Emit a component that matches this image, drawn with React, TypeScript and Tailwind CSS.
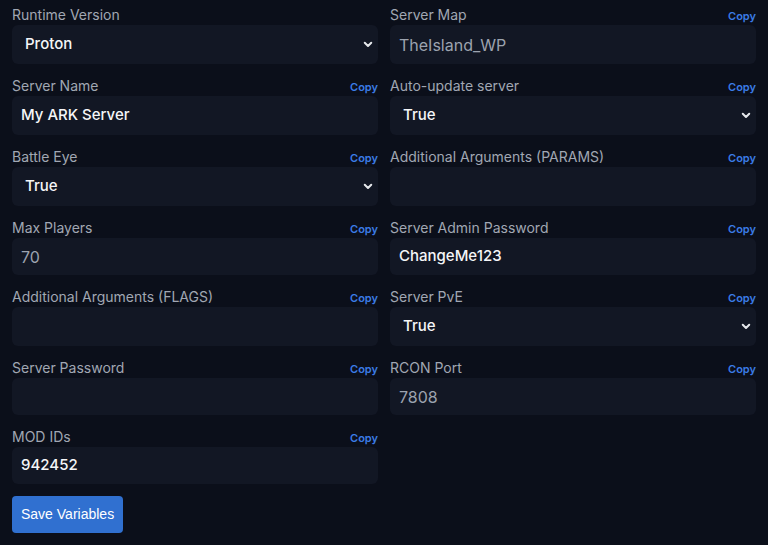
import React from "react";

type Field =
  | { label: string; kind: "select"; value: string; copy?: boolean }
  | { label: string; kind: "input"; value?: string; placeholder?: string; copy?: boolean };

const fields: Field[] = [
  { label: "Runtime Version", kind: "select", value: "Proton" },
  { label: "Server Map", kind: "input", placeholder: "TheIsland_WP", copy: true },
  { label: "Server Name", kind: "input", value: "My ARK Server", copy: true },
  { label: "Auto-update server", kind: "select", value: "True", copy: true },
  { label: "Battle Eye", kind: "select", value: "True", copy: true },
  { label: "Additional Arguments (PARAMS)", kind: "input", copy: true },
  { label: "Max Players", kind: "input", placeholder: "70", copy: true },
  { label: "Server Admin Password", kind: "input", value: "ChangeMe123", copy: true },
  { label: "Additional Arguments (FLAGS)", kind: "input", copy: true },
  { label: "Server PvE", kind: "select", value: "True", copy: true },
  { label: "Server Password", kind: "input", copy: true },
  { label: "RCON Port", kind: "input", placeholder: "7808", copy: true },
  { label: "MOD IDs", kind: "input", value: "942452", copy: true },
];

function Chevron() {
  return (
    <svg width="10" height="7" viewBox="0 0 10 7" fill="none" className="shrink-0">
      <path d="M1.75 1.75 5 5 8.25 1.75" stroke="#e5e7eb" strokeWidth="2" strokeLinecap="round" strokeLinejoin="round" />
    </svg>
  );
}

function FieldBox({ field }: { field: Field }) {
  return (
    <div className="flex flex-col">
      <div className="flex h-[21px] shrink-0 items-baseline justify-between">
        <span className="text-[14px] leading-[21px] text-[#a1a7b3]">{field.label}</span>
        {field.copy && (
          <span className="text-[11px] leading-[21px] font-semibold text-[#3b7ce6]">Copy</span>
        )}
      </div>
      {field.kind === "select" ? (
        <div className="flex h-[39px] shrink-0 items-center justify-between rounded-md bg-[#121724] pl-[13px] pr-[5px]">
          <span className="text-[15px] font-medium text-[#f5f6f8]">{field.value}</span>
          <Chevron />
        </div>
      ) : (
        <div className="flex min-h-[37px] grow items-center rounded-md bg-[#121724] px-[9px]">
          {field.value ? (
            <span className="text-[15px] font-medium text-[#f5f6f8]">{field.value}</span>
          ) : (
            <span className="text-[16px] text-[#9ca3af]">{field.placeholder}</span>
          )}
        </div>
      )}
    </div>
  );
}

export default function App() {
  return (
    <div
      className="min-h-[545px] w-[768px] bg-[#0b0f1a] px-3 pt-1"
      style={{ fontFamily: "Inter, 'Noto Sans', sans-serif" }}
    >
      <div className="grid grid-cols-2 gap-x-3 gap-y-[11px]">
        {fields.map((f) => (
          <FieldBox key={f.label} field={f} />
        ))}
      </div>
      <button
        className="mt-3 h-[37px] rounded-[4px] bg-[#3070d0] px-[9px] text-[14px] text-white"
        style={{ fontFamily: "'Liberation Sans', Arial, sans-serif" }}
      >
        Save Variables
      </button>
    </div>
  );
}
